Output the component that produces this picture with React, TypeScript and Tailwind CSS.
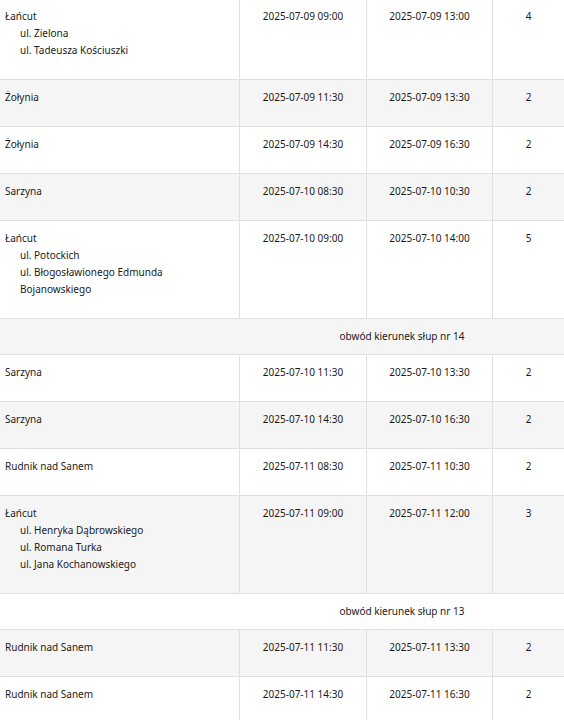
import React from "react";

type Row =
  | { kind: "data"; place: string; streets?: string[]; start: string; end: string; n: string }
  | { kind: "group"; label: string };

const rows: Row[] = [
  { kind: "data", place: "Łańcut", streets: ["ul. Zielona", "ul. Tadeusza Kościuszki"], start: "2025-07-09 09:00", end: "2025-07-09 13:00", n: "4" },
  { kind: "data", place: "Żołynia", start: "2025-07-09 11:30", end: "2025-07-09 13:30", n: "2" },
  { kind: "data", place: "Żołynia", start: "2025-07-09 14:30", end: "2025-07-09 16:30", n: "2" },
  { kind: "data", place: "Sarzyna", start: "2025-07-10 08:30", end: "2025-07-10 10:30", n: "2" },
  { kind: "data", place: "Łańcut", streets: ["ul. Potockich", "ul. Błogosławionego Edmunda", "Bojanowskiego"], start: "2025-07-10 09:00", end: "2025-07-10 14:00", n: "5" },
  { kind: "group", label: "obwód kierunek słup nr 14" },
  { kind: "data", place: "Sarzyna", start: "2025-07-10 11:30", end: "2025-07-10 13:30", n: "2" },
  { kind: "data", place: "Sarzyna", start: "2025-07-10 14:30", end: "2025-07-10 16:30", n: "2" },
  { kind: "data", place: "Rudnik nad Sanem", start: "2025-07-11 08:30", end: "2025-07-11 10:30", n: "2" },
  { kind: "data", place: "Łańcut", streets: ["ul. Henryka Dąbrowskiego", "ul. Romana Turka", "ul. Jana Kochanowskiego"], start: "2025-07-11 09:00", end: "2025-07-11 12:00", n: "3" },
  { kind: "group", label: "obwód kierunek słup nr 13" },
  { kind: "data", place: "Rudnik nad Sanem", start: "2025-07-11 11:30", end: "2025-07-11 13:30", n: "2" },
  { kind: "data", place: "Rudnik nad Sanem", start: "2025-07-11 14:30", end: "2025-07-11 16:30", n: "2" },
];

export default function App() {
  return (
    <div
      className="w-[564px] h-[720px] overflow-hidden bg-white text-[#1a1a1a] text-[10px] leading-[17px]"
      style={{ fontFamily: '"Noto Sans", "Open Sans", sans-serif' }}
    >
      <div className="-mt-[1px]">
        {rows.map((r, i) => {
          const bg = i % 2 === 1 ? "bg-[#f5f5f5]" : "bg-white";
          if (r.kind === "group") {
            return (
              <div key={i} className={`grid grid-cols-[240px_324px] border-b border-[#e0e0e0] ${bg}`}>
                <div />
                <div className="pt-[9px] pb-[9px] text-center">{r.label}</div>
              </div>
            );
          }
          return (
            <div key={i} className={`grid grid-cols-[240px_127px_126px_71px] border-b border-[#e0e0e0] ${bg}`}>
              <div className="border-r border-[#e0e0e0] pl-[5px] pt-[9px] pb-[20px]">
                <div>{r.place}</div>
                {r.streets?.map((s) => (
                  <div key={s} className="pl-[15px]">{s}</div>
                ))}
              </div>
              <div className="border-r border-[#e0e0e0] pt-[9px] pb-[20px] text-center">{r.start}</div>
              <div className="border-r border-[#e0e0e0] pt-[9px] pb-[20px] text-center">{r.end}</div>
              <div className="pt-[9px] pb-[20px] text-center">{r.n}</div>
            </div>
          );
        })}
      </div>
    </div>
  );
}
